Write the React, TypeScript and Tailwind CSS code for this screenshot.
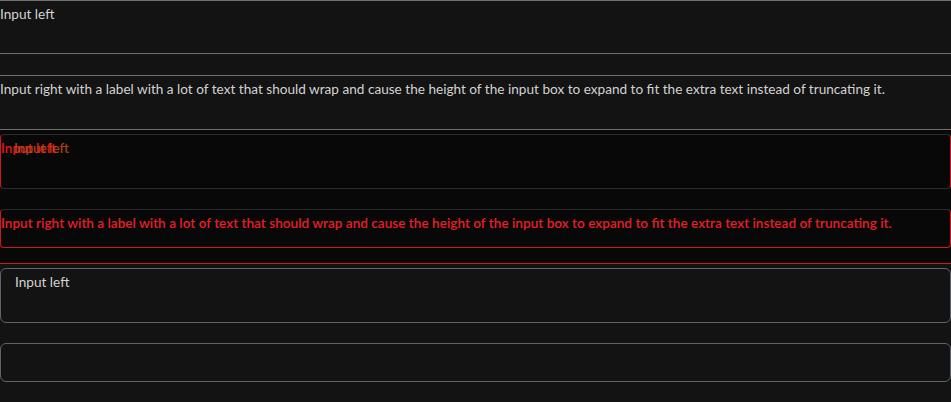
const LONG =
  "Input right with a label with a lot of text that should wrap and cause the height of the input box to expand to fit the extra text instead of truncating it.";

export default function App() {
  return (
    <div className="w-[951px] h-[402px] overflow-hidden bg-[#131313] font-['Lato',sans-serif] text-[13.6px] leading-4">
      {/* plain fields */}
      <div className="flex flex-col gap-[21px] bg-[#131313]">
        <div className="h-[54px] border-y border-[#707070] pt-[5px]">
          <div className="text-[#d2d2d2]">Input left</div>
        </div>
        <div className="h-[55px] border-y border-[#707070] pt-[5px]">
          <div className="text-[#d2d2d2]">{LONG}</div>
        </div>
      </div>

      {/* error fields */}
      <div className="flex flex-col gap-[20px] bg-[#080808] pt-[4px] pb-[15px] border-b border-[#d0161c]">
        <div className="h-[55px] rounded-[4px] border border-[#2c2c2c] border-x-[#d0161c] pt-[5px]">
          <div className="relative font-semibold text-[#e0161e]">
            <span>Input left</span>
            <span className="absolute left-[13px] top-0 text-[#c8501a] opacity-80">Input left</span>
          </div>
        </div>
        <div className="h-[39px] rounded-[4px] border border-[#2c2c2c] border-x-[#d0161c] border-b-[#d0161c] pt-[5px]">
          <div className="font-semibold text-[#e81e28]">{LONG}</div>
        </div>
      </div>

      {/* outlined fields */}
      <div className="flex flex-col gap-[20px] pt-[4px]">
        <div className="h-[55px] rounded-[6px] border border-[#5f6266] px-[14px] pt-[5px]">
          <div className="text-[#d2d2d2]">Input left</div>
        </div>
        <div className="h-[39px] rounded-[6px] border border-[#5f6266]" />
      </div>
    </div>
  );
}
